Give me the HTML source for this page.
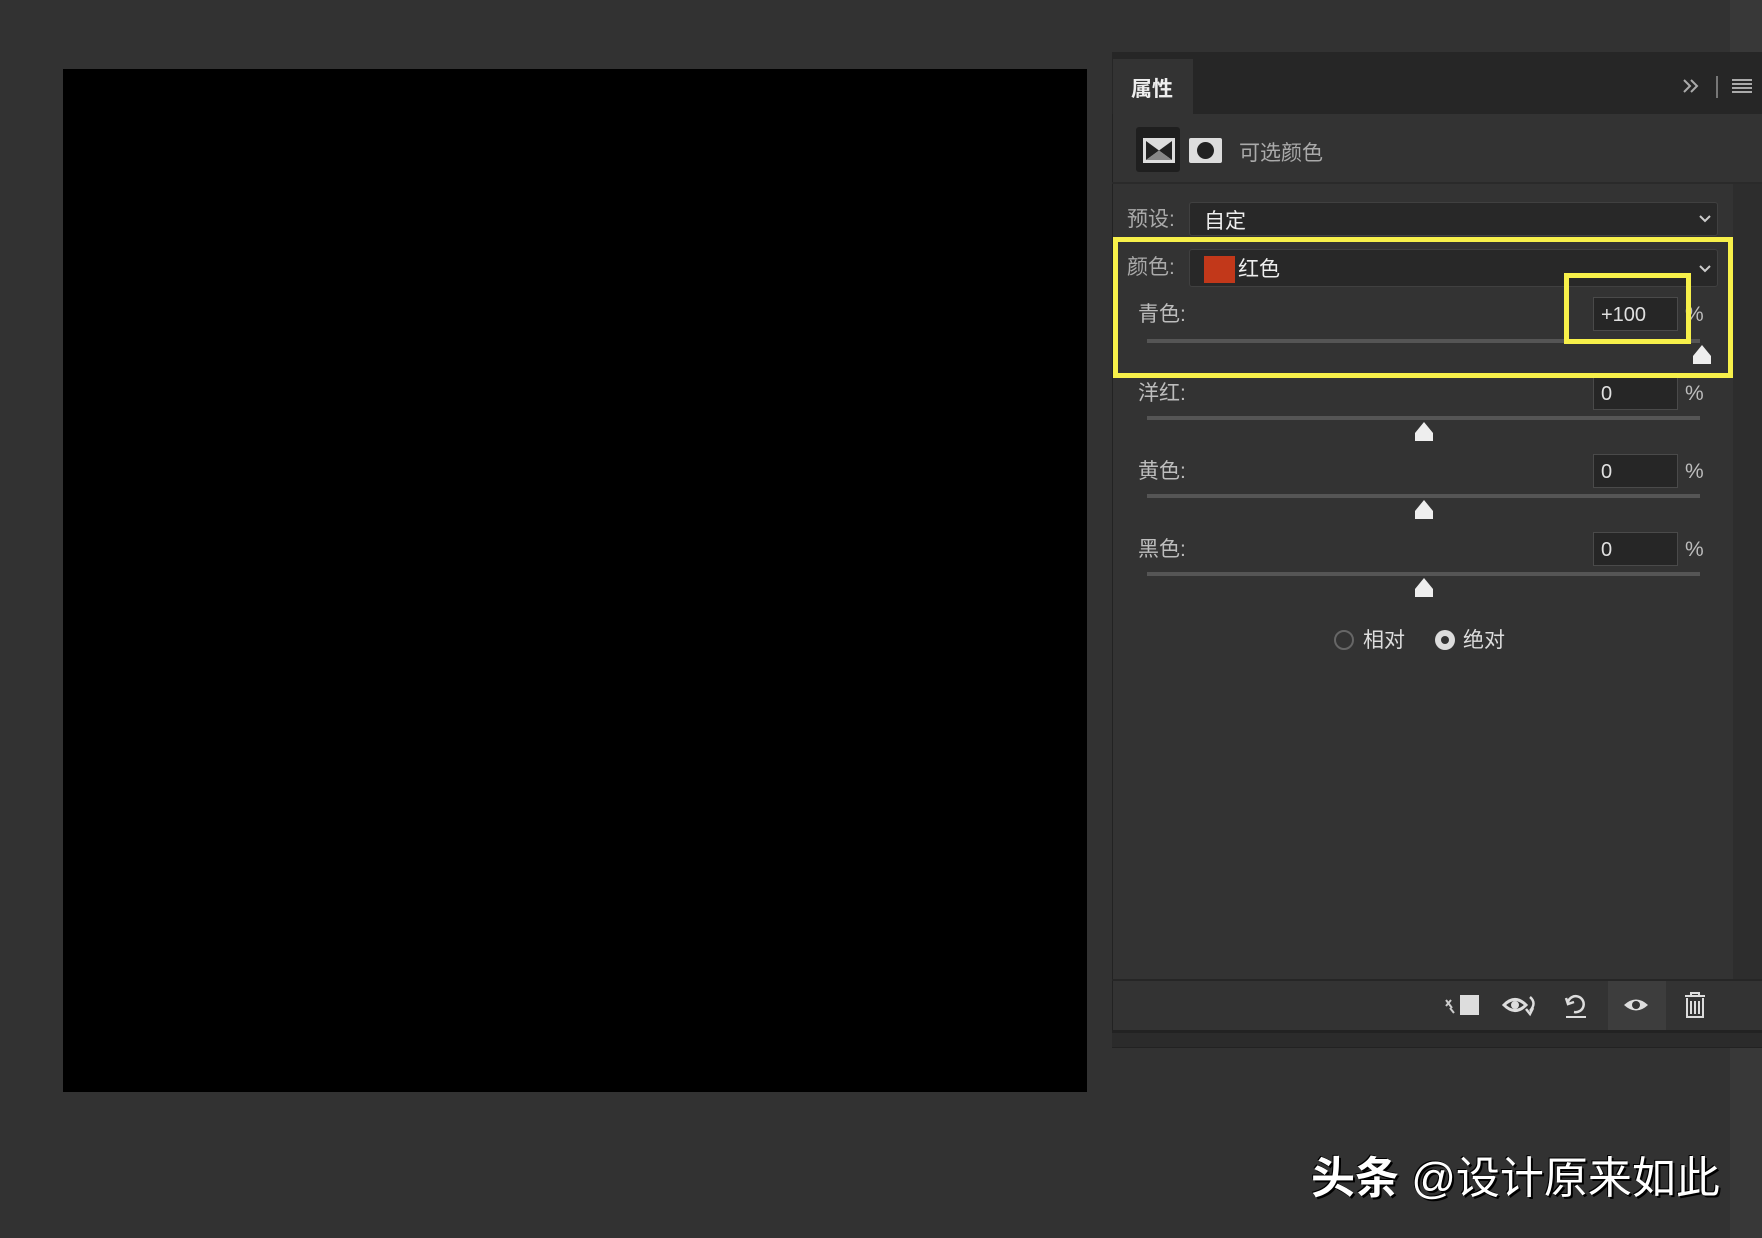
<!DOCTYPE html>
<html><head><meta charset="utf-8"><style>
*{margin:0;padding:0;box-sizing:border-box}
body{width:1762px;height:1238px;background:#323232;position:relative;overflow:hidden;font-family:"Liberation Sans","Noto Sans CJK SC",sans-serif;color:#d6d6d6}
.a{position:absolute}
.lbl{position:absolute;font-size:21px;color:#bdbdbd;line-height:1}
.inp{position:absolute;left:1593px;width:85px;height:34px;background:#262626;border:1px solid #4a4a4a;font-size:20px;color:#e0e0e0;padding:6px 0 0 7px}
.pct{position:absolute;left:1685px;font-size:21px;color:#bdbdbd}
.trk{position:absolute;left:1147px;width:553px;height:4px;background:#555}
.th{position:absolute;width:20px;height:20px}
.dd{position:absolute;left:1189px;width:529px;background:#282828;border:1px solid #404040;border-radius:3px}
</style></head><body>
<div class="a" style="left:1730px;top:0;width:32px;height:1238px;background:#383838"></div>
<div class="a" style="left:63px;top:69px;width:1024px;height:1023px;background:#000"></div>
<div class="a" style="left:1112px;top:52px;width:650px;height:996px;background:#333;border-left:1px solid #222"></div>
<div class="a" style="left:1112px;top:52px;width:650px;height:62px;background:#262626"></div>
<div class="a" style="left:1113px;top:59px;width:80px;height:56px;background:#333"></div>
<div class="a" style="left:1131px;top:73px;font-size:21px;color:#eee;font-weight:bold">属性</div>
<svg class="a" style="left:1680px;top:74px" width="80" height="28"><path d="M4 6l6 6-6 6M11 6l6 6-6 6" stroke="#aaa" stroke-width="2" fill="none"/><rect x="36" y="2" width="2" height="22" fill="#777"/><g fill="#aaa"><rect x="52" y="5" width="20" height="2"/><rect x="52" y="9" width="20" height="2"/><rect x="52" y="13" width="20" height="2"/><rect x="52" y="17" width="20" height="2"/></g></svg>
<div class="a" style="left:1136px;top:127px;width:44px;height:45px;background:#1f1f1f;border-radius:3px"></div>
<svg class="a" style="left:1143px;top:138px" width="32" height="25"><rect width="32" height="25" fill="#ddd"/><path d="M3 3L16 12.5 3 22z" fill="#222"/><path d="M29 3L16 12.5 29 22z" fill="#222"/><path d="M3 22L16 12.5 29 22z" fill="#888"/></svg>
<div class="a" style="left:1189px;top:138px;width:33px;height:25px;background:#ddd;border-radius:2px"></div>
<div class="a" style="left:1197px;top:142px;width:17px;height:17px;background:#222;border-radius:50%"></div>
<div class="a" style="left:1239px;top:137px;font-size:21px;color:#aaa">可选颜色</div>
<div class="a" style="left:1112px;top:182px;width:650px;height:2px;background:#2a2a2a"></div>
<div class="a" style="left:1733px;top:184px;width:29px;height:796px;background:#2d2d2d"></div>
<div class="lbl" style="left:1127px;top:209px;color:#aaa">预设:</div>
<div class="dd" style="top:202px;height:34px"></div>
<div class="a" style="left:1204px;top:205px;font-size:21px;color:#eee">自定</div>
<svg class="a" style="left:1698px;top:214px" width="14" height="10"><path d="M2 2l5 5 5-5" stroke="#ccc" stroke-width="2" fill="none"/></svg>
<div class="lbl" style="left:1127px;top:257px;color:#aaa">颜色:</div>
<div class="dd" style="top:249px;height:38px"></div>
<div class="a" style="left:1204px;top:256px;width:31px;height:27px;background:#c2381a"></div>
<div class="a" style="left:1238px;top:253px;font-size:21px;color:#eee">红色</div>
<svg class="a" style="left:1698px;top:264px" width="14" height="10"><path d="M2 2l5 5 5-5" stroke="#ccc" stroke-width="2" fill="none"/></svg>
<div class="lbl" style="left:1138px;top:304px">青色:</div>
<div class="inp" style="top:297px">+100</div><div class="pct" style="top:303px">%</div>
<div class="trk" style="top:339px"></div>
<svg class="th" style="left:1692px;top:345px" viewBox="0 0 20 20"><path d="M10 0L19 11V19H1V11Z" fill="#eee"/></svg>
<div class="lbl" style="left:1138px;top:383px">洋红:</div>
<div class="inp" style="top:376px">0</div><div class="pct" style="top:382px">%</div>
<div class="trk" style="top:416px"></div>
<svg class="th" style="left:1414px;top:422px" viewBox="0 0 20 20"><path d="M10 0L19 11V19H1V11Z" fill="#eee"/></svg>
<div class="lbl" style="left:1138px;top:461px">黄色:</div>
<div class="inp" style="top:454px">0</div><div class="pct" style="top:460px">%</div>
<div class="trk" style="top:494px"></div>
<svg class="th" style="left:1414px;top:500px" viewBox="0 0 20 20"><path d="M10 0L19 11V19H1V11Z" fill="#eee"/></svg>
<div class="lbl" style="left:1138px;top:539px">黑色:</div>
<div class="inp" style="top:532px">0</div><div class="pct" style="top:538px">%</div>
<div class="trk" style="top:572px"></div>
<svg class="th" style="left:1414px;top:578px" viewBox="0 0 20 20"><path d="M10 0L19 11V19H1V11Z" fill="#eee"/></svg>
<div class="a" style="left:1113px;top:237px;width:620px;height:141px;border:5px solid #f7f04a"></div>
<div class="a" style="left:1564px;top:273px;width:127px;height:71px;border:5px solid #f7f04a"></div>
<div class="a" style="left:1334px;top:630px;width:20px;height:20px;border:2px solid #666;border-radius:50%"></div>
<div class="a" style="left:1363px;top:624px;font-size:21px;color:#ddd">相对</div>
<div class="a" style="left:1435px;top:630px;width:20px;height:20px;background:#ddd;border-radius:50%"></div>
<div class="a" style="left:1441px;top:636px;width:8px;height:8px;background:#333;border-radius:50%"></div>
<div class="a" style="left:1463px;top:624px;font-size:21px;color:#ddd">绝对</div>
<div class="a" style="left:1112px;top:979px;width:650px;height:2px;background:#262626"></div>
<div class="a" style="left:1112px;top:1030px;width:650px;height:3px;background:#222"></div>
<div class="a" style="left:1112px;top:1033px;width:650px;height:15px;background:#2b2b2b;border-bottom:1px solid #222"></div>
<div class="a" style="left:1608px;top:981px;width:58px;height:49px;background:#3d3d3d"></div>
<svg class="a" style="left:1440px;top:990px" width="280" height="32">
<rect x="20" y="5" width="19" height="20" fill="#ddd"/>
<path d="M6 10l6 8M6 16l5-6M10 18l4 5" stroke="#ccc" stroke-width="2" fill="none"/>
<path d="M64 15q11-11 22 0q-11 11-22 0z" fill="none" stroke="#ddd" stroke-width="3"/><circle cx="75" cy="15" r="4" fill="#ddd"/>
<path d="M90 7q7 6 0 14M86 19l4 5 3-6" stroke="#ddd" stroke-width="2.5" fill="none"/>
<path d="M128 12a8 8 0 1 1 6 10M126 8l2 6 6-2" stroke="#ddd" stroke-width="2.5" fill="none"/><rect x="126" y="26" width="20" height="2" fill="#ddd"/>
<path d="M184 15q12-11 24 0q-12 11-24 0z" fill="#ddd"/><circle cx="196" cy="15" r="4" fill="#333"/>
<path d="M245 6h20M251 6v-3h8v3M247 8v19h16v-19M251 11v13M255 11v13M259 11v13" stroke="#ddd" stroke-width="2" fill="none"/>
</svg>
<div class="a" style="left:1311px;top:1142px;font-size:44px;color:#fff;text-shadow:2px 2px 0 #000,-1px -1px 0 #000;white-space:nowrap"><b>头条</b> @设计原来如此</div>
</body></html>
